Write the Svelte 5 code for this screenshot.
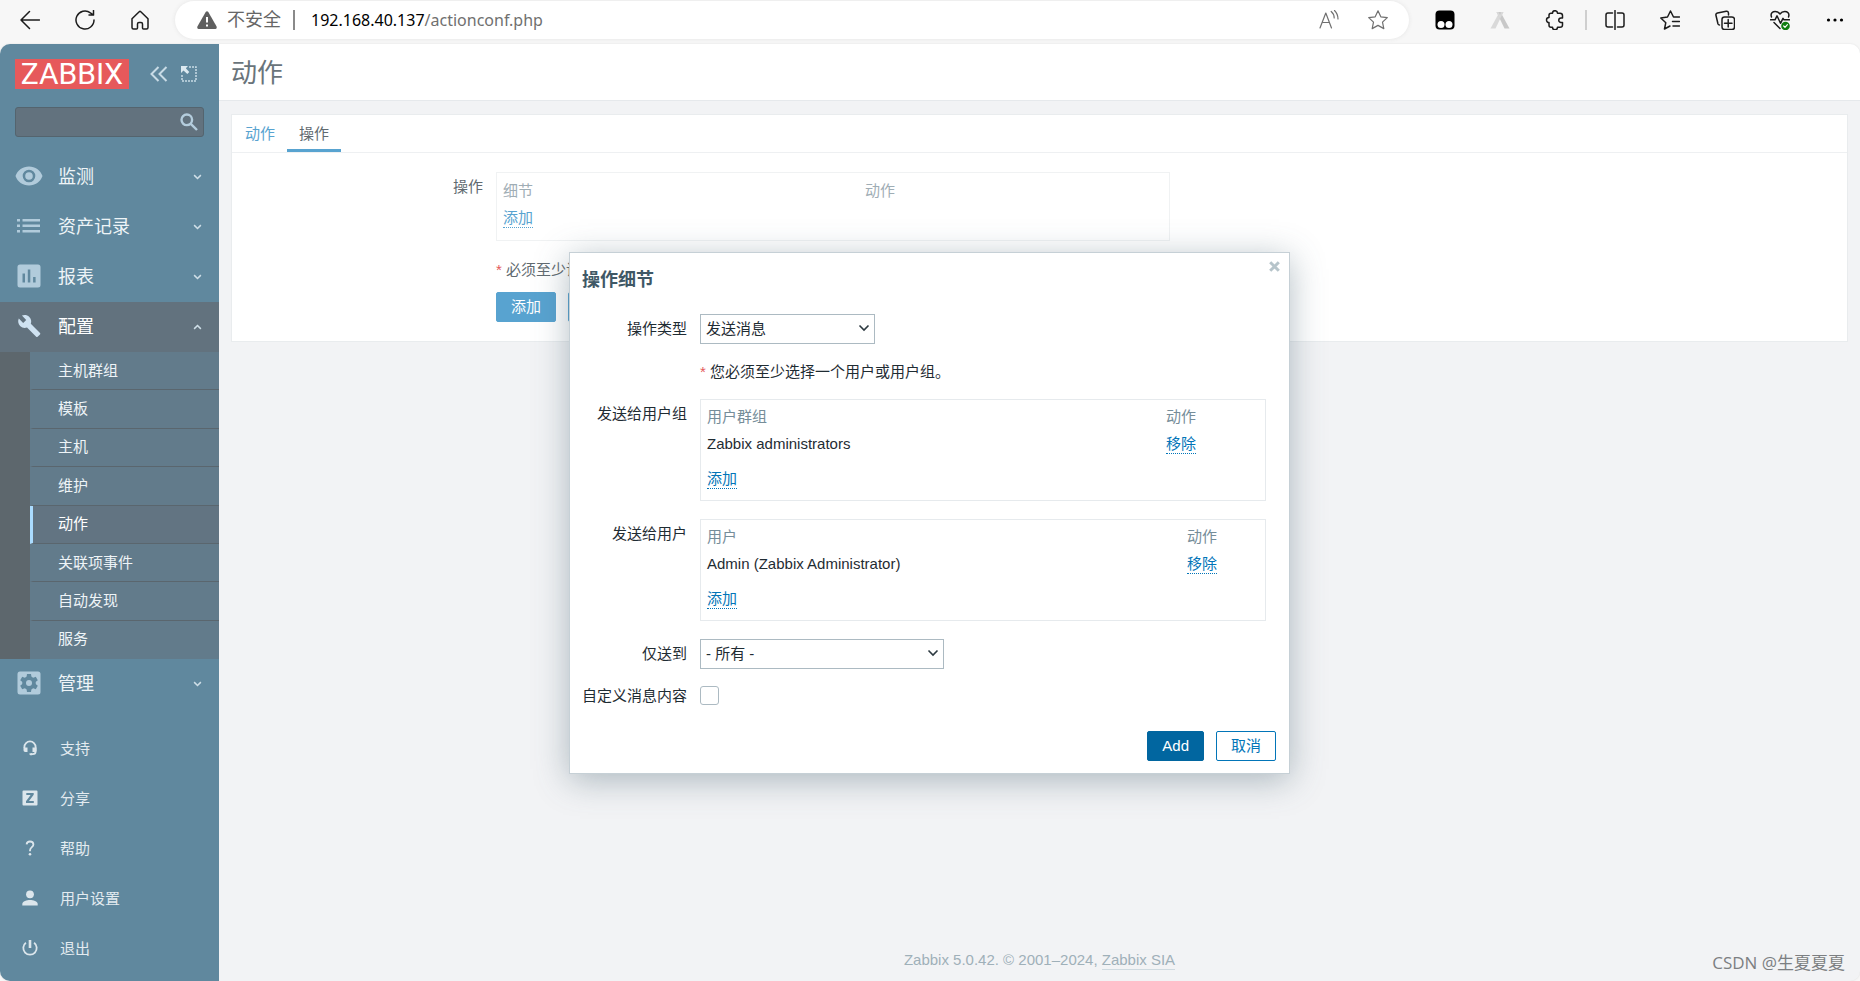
<script>
  let search = $state('');
  let operation = $state('发送消息');
  let media = $state('- 所有 -');
  let custom = $state(false);

  const menu = [
    { icon: 'eye', label: '监测' },
    { icon: 'list', label: '资产记录' },
    { icon: 'chart', label: '报表' },
    {
      icon: 'wrench',
      label: '配置',
      open: true,
      items: ['主机群组', '模板', '主机', '维护', '动作', '关联项事件', '自动发现', '服务']
    },
    { icon: 'gear', label: '管理' }
  ];
  const selected = '动作';

  const links = [
    { icon: 'support', label: '支持' },
    { icon: 'share', label: '分享' },
    { icon: 'help', label: '帮助' },
    { icon: 'user', label: '用户设置' },
    { icon: 'power', label: '退出' }
  ];

  const recipients = [
    { label: '发送给用户组', head: '用户群组', name: 'Zabbix administrators', kind: 'groups' },
    { label: '发送给用户', head: '用户', name: 'Admin (Zabbix Administrator)', kind: 'users' }
  ];
</script>

{#snippet chevron()}
  <svg class="chevron" viewBox="0 0 12 8" width="12" height="8" aria-hidden="true"><path d="M1.5 1.5 6 6l4.500-4.500" /></svg>
{/snippet}

{#snippet glyph(name)}
  {#if name === 'eye'}
    <svg viewBox="0 0 28 20" width="28" height="20"><path fill-rule="evenodd" d="M14 0.500C7.800.500 2.500 4.300.500 10c2 5.700 7.300 9.500 13.500 9.500S25.500 15.700 27.500 10C25.500 4.300 20.200.500 14 .500zm0 15.800a6.300 6.300 0 1 1 0-12.600 6.300 6.300 0 0 1 0 12.600zm0-10.100a3.800 3.800 0 1 0 0 7.600 3.800 3.800 0 0 0 0-7.600z" /></svg>
  {:else if name === 'list'}
    <svg viewBox="0 0 24 16" width="24" height="16"><path d="M0 1h3v2.500H0zm5.500 0H23v2.500H5.500zM0 6.500h3V9H0zm5.500 0H23V9H5.500zM0 12h3v2.500H0zm5.500 0H23v2.500H5.500z" /></svg>
  {:else if name === 'chart'}
    <svg viewBox="0 0 24 24" width="24" height="24"><path fill-rule="evenodd" d="M3 .500h18A2.500 2.500 0 0 1 23.500 3v18a2.500 2.500 0 0 1-2.500 2.500H3A2.500 2.500 0 0 1 .500 21V3A2.500 2.500 0 0 1 3 .500zM5.500 9.500v9H8v-9zm5.300-4v13h2.500v-13zm5.300 7.500v5.500h2.500V13z" /></svg>
  {:else if name === 'wrench'}
    <svg viewBox="0 0 24 24" width="24" height="24"><path d="M23 19 13.800 9.800c.900-2.300.400-5-1.500-6.900C10.300.900 7.300.500 4.900 1.600l4.300 4.300-3 3L1.800 4.600C.600 7 1.100 10 3.100 12c1.900 1.900 4.600 2.400 6.900 1.500l9.200 9.200c.4.400 1 .4 1.400 0l2.400-2.300c.4-.4.4-1.100 0-1.400z" /></svg>
  {:else if name === 'gear'}
    <svg viewBox="0 0 24 24" width="24" height="24"><rect x=".500" y=".500" width="23" height="23" rx="2.500" /><g class="hole"><circle cx="12" cy="12" r="6.800" /><path d="M10 3h4l.600 4H9.400zM10 21h4l.600-4H9.400zM3.200 9.200l2-3.500 3.700 1.500-2.600 4.500zM20.800 9.200l-2-3.500-3.700 1.500 2.600 4.500zM3.200 14.800l2 3.500 3.700-1.500-2.600-4.500zM20.800 14.800l-2 3.500-3.700-1.500 2.600-4.500z" /></g><circle cx="12" cy="12" r="3" /></svg>
  {:else if name === 'support'}
    <svg viewBox="0 0 16 16" width="16" height="16"><path class="line" d="M2.400 8V7a5.600 5.600 0 0 1 11.200 0v4.500c0 1.700-1 2.700-2.800 2.700H9" /><path d="M1.500 7.500h4V12H3.200a1.700 1.700 0 0 1-1.700-1.700zm9 0h4v3.800l-1 .700h-3zM7.500 13.200h2.700v2H8.500a1 1 0 0 1-1-1z" /></svg>
  {:else if name === 'share'}
    <svg viewBox="0 0 16 16" width="16" height="16"><path fill-rule="evenodd" d="M1.500.500h13a1 1 0 0 1 1 1v13a1 1 0 0 1-1 1h-13a1 1 0 0 1-1-1v-13a1 1 0 0 1 1-1zM4.300 3v2h4.300L4 11.200V13h7.800v-2H7l4.700-6.200V3z" /></svg>
  {:else if name === 'help'}
    <svg viewBox="0 0 16 16" width="16" height="16"><path class="line" d="M4.600 4.300C4.800 2.500 6.200 1.500 8 1.500c2 0 3.400 1.100 3.400 2.900C11.400 7.200 8 7.200 8 10.500v.8" /><circle cx="8" cy="14.200" r="1.300" /></svg>
  {:else if name === 'user'}
    <svg viewBox="0 0 16 16" width="16" height="16"><circle cx="8" cy="4.300" r="3.900" /><path d="M.300 15.500v-1.600c0-2.600 4.600-3.900 7.700-3.900s7.700 1.300 7.700 3.900v1.600z" /></svg>
  {:else}
    <svg viewBox="0 0 16 16" width="16" height="16"><path class="line" d="M3.900 2.700a6.700 6.700 0 1 0 8.200 0" /><path class="line thick" d="M8 0v8" /></svg>
  {/if}
{/snippet}

<div class="browser">
  <div class="toolbar">
    <button class="tool" aria-label="后退"><svg viewBox="0 0 20 20"><path d="M19.500 10H1M9.500 1.500 1 10l8.500 8.500" /></svg></button>
    <button class="tool" aria-label="刷新"><svg viewBox="0 0 20 20"><path d="M19 10a9 9 0 1 1-3.600-7.200L18.500 5M18.500.500V5H14" /></svg></button>
    <button class="tool" aria-label="主页"><svg viewBox="0 0 20 20"><path d="M2 8.800 9.200 1.700q.8-.7 1.600 0L18 8.800v8.700q0 1.500-1.500 1.500h-3q-1 0-1-1v-4q0-1.500-1.500-1.500H9q-1.500 0-1.500 1.500v4q0 1-1 1h-3Q2 19 2 17.500z" /></svg></button>
    <div class="address">
      <svg class="warn" viewBox="0 0 20 18" width="20" height="18"><path d="M8.700 1Q10-.7 11.300 1l8.300 14.600Q20 18 18.300 18H1.700Q0 18 .4 15.600z" /><path class="mark" d="M10 6v5.500M10 13.500v2" /></svg>
      <span class="insecure">不安全</span>
      <span class="bar"></span>
      <span class="url">192.168.40.137<span>/actionconf.php</span></span>
      <button class="tool" aria-label="朗读"><svg viewBox="0 0 20 20"><path d="m1 18 5.800-15L12.500 18M3 12.500h7.500M12.200 1.500q3 2.500 3 6.500M15.500.500q3.500 3.500 3.500 8.500" /></svg></button>
      <button class="tool" aria-label="收藏"><svg viewBox="0 0 20 20"><path d="m10 .8 2.800 6 6.500.8-4.800 4.500 1.300 6.500L10 15.400l-5.800 3.200 1.300-6.500L.7 7.600l6.500-.8z" /></svg></button>
    </div>
    <button class="tool" aria-label="扩展一"><svg viewBox="0 0 20 20"><rect class="solid" x=".500" y=".500" width="19" height="19" rx="4" /><circle class="white" cx="6" cy="14.500" r="3.500" /><circle class="white" cx="14" cy="14.500" r="3.500" /></svg></button>
    <button class="tool" aria-label="扩展二"><svg viewBox="0 0 20 20"><path class="paler" d="M9.500 2h4L5.500 18.500H.500z" /><path class="pale" d="M10.500 2h-4l8 16.500h5z" /><path class="paler" d="M6.500 2h2L10 5l1.500-3h2l-3.500 7z" /></svg></button>
    <button class="tool" aria-label="扩展"><svg viewBox="0 0 20 20"><path d="M7.500 3.200a2.500 2.500 0 0 1 5 0H15q2.500 0 2.500 2.300V8h-1.500a2 2 0 0 0 0 4.500h1.500v2.500q0 2.300-2.500 2.300h-2.500a2.500 2.500 0 0 1-5 0H6q-2 0-2-2v-2.700a2.500 2.500 0 0 1 0-5V5.200q0-2 2-2z" /></svg></button>
    <span class="divider"></span>
    <button class="tool near" aria-label="分屏"><svg viewBox="0 0 20 20"><path d="M7.500 3H3Q1 3 1 5v10q0 2 2 2h4.500M12.500 3H17q2 0 2 2v10q0 2-2 2h-4.500M10 .5v19" /></svg></button>
    <button class="tool" aria-label="收藏夹"><svg viewBox="0 0 20 20"><path d="M19.500 7h-6L10.500 1 7.500 7 .800 8l5 4.700-1.300 6.300 5.500-3M12.500 11.500h7M13 16h6.500" /></svg></button>
    <button class="tool" aria-label="集锦"><svg viewBox="0 0 20 20"><path d="M13.500 5V3q-.3-2-2.300-1.700L2.500 3Q.5 3.500 1 5.500l2 8.500q.5 1 1.500 1" /><rect x="7" y="7" width="12.500" height="12.500" rx="2.500" /><path d="M13.200 9.500v7.500M9.500 13.200H17" /></svg></button>
    <button class="tool" aria-label="浏览器概要"><svg viewBox="0 0 20 20"><path d="M1.500 7C0 3 3 1.500 5.200 1.500q3 0 4.800 2.500 1.800-2.500 4.800-2.500C17 1.500 20 3 18.500 7M.5 9.800H5l2-4 3.500 7.500 2.500-5 1 1.500h5.500M4 12.500l6 6" /><circle class="green" cx="15.500" cy="16" r="4.300" /><path class="tick" d="m13.700 16 1.300 1.300 2.400-2.600" /></svg></button>
    <button class="tool" aria-label="更多"><svg viewBox="0 0 20 20"><circle class="solid" cx="3.500" cy="10" r="1.600" /><circle class="solid" cx="10" cy="10" r="1.600" /><circle class="solid" cx="16.500" cy="10" r="1.600" /></svg></button>
  </div>

  <div class="page">
    <aside>
      <div class="brand">
        <a class="logo" href="#home">ZABBIX</a>
        <button aria-label="折叠菜单"><svg viewBox="0 0 18 16" width="18" height="16"><path d="M8.500 1 1.500 8l7 7M16.500 1l-7 7 7 7" /></svg></button>
        <button aria-label="隐藏菜单"><svg viewBox="0 0 16 16" width="16" height="16"><path class="dots" d="M8 1h7v14H1V8" /><path class="arrow" d="M0 0h7L4.800 2.200 8.300 6 6.300 8 2.500 4.500 0 7z" /></svg></button>
      </div>
      <div class="search">
        <input type="text" aria-label="搜索" bind:value={search} />
        <button aria-label="搜索"><svg viewBox="0 0 18 18" width="18" height="18"><circle cx="6.800" cy="6.800" r="5.300" /><path d="m10.800 10.800 6.200 6.200" /></svg></button>
      </div>
      <nav>
        {#each menu as entry}
          <a class="entry" class:open={entry.open} href="#menu">
            <span class="ico">{@render glyph(entry.icon)}</span>{entry.label}{@render chevron()}
          </a>
          {#if entry.items}
            <div class="sub">
              {#each entry.items as item}
                <a class:current={item === selected} href="#item">{item}</a>
              {/each}
            </div>
          {/if}
        {/each}
      </nav>
      <div class="links">
        {#each links as link}
          <a href="#link"><span class="ico">{@render glyph(link.icon)}</span>{link.label}</a>
        {/each}
      </div>
    </aside>

    <main>
      <header><h1>动作</h1></header>
      <section class="panel">
        <div class="tabs">
          <a href="#action">动作</a>
          <a class="active" href="#operations">操作</a>
        </div>
        <div class="row">
          <span class="label">操作</span>
          <table class="ops">
            <thead><tr><th>细节</th><th>动作</th></tr></thead>
            <tbody><tr><td colspan="2"><a class="dotted" href="#add">添加</a></td></tr></tbody>
          </table>
        </div>
        <div class="row">
          <span></span>
          <p><i>*</i> 必须至少设</p>
        </div>
        <div class="row">
          <span></span>
          <div class="buttons"><button class="btn">添加</button><button class="btn plain" aria-label="取消"></button></div>
        </div>
      </section>
      <footer>Zabbix 5.0.42. © 2001–2024, <a href="#sia">Zabbix SIA</a></footer>
    </main>
  </div>

  <div class="dialog" role="dialog" aria-labelledby="dialog-title">
    <button class="close" aria-label="关闭"><svg viewBox="0 0 11 11" width="11" height="11"><path d="m1.200 1.200 8.600 8.600M9.800 1.200 1.200 9.800" /></svg></button>
    <h2 id="dialog-title">操作细节</h2>
    <div class="form">
      <label for="type">操作类型</label>
      <span class="select type">
        <select id="type" bind:value={operation}><option>发送消息</option></select>
        {@render chevron()}
      </span>
      <p><i>*</i> 您必须至少选择一个用户或用户组。</p>
      {#each recipients as r}
        <span class="label">{r.label}</span>
        <table class={r.kind}>
          <thead><tr><th>{r.head}</th><th>动作</th></tr></thead>
          <tbody>
            <tr><td>{r.name}</td><td><a class="dotted" href="#remove">移除</a></td></tr>
            <tr class="add"><td colspan="2"><a class="dotted" href="#add">添加</a></td></tr>
          </tbody>
        </table>
      {/each}
      <label for="media">仅送到</label>
      <span class="select media">
        <select id="media" bind:value={media}><option>- 所有 -</option></select>
        {@render chevron()}
      </span>
      <label class="short" for="custom">自定义消息内容</label>
      <input id="custom" type="checkbox" bind:checked={custom} />
    </div>
    <div class="buttons end"><button class="btn">Add</button><button class="btn plain">取消</button></div>
  </div>
  <span class="watermark">CSDN @生夏夏夏</span>
</div>

<style>
  :global(body) {
    margin: 0;
  }
  .browser {
    position: relative;
    display: flex;
    flex-direction: column;
    min-height: 100vh;
    background: #f7f7f7;
    color: #1f2c33;
    font: 15px/20px 'Liberation Sans', 'Noto Sans CJK SC', sans-serif;
  }
  .browser * {
    box-sizing: border-box;
  }
  a {
    color: inherit;
    text-decoration: none;
  }
  button {
    padding: 0;
    border: 0;
    background: none;
    color: inherit;
    font: inherit;
  }
  svg {
    display: block;
  }

  /* browser toolbar */
  .toolbar {
    display: flex;
    align-items: center;
    height: 44px;
    padding: 0 15px 4px 20px;
  }
  .tool {
    flex: none;
    width: 20px;
    height: 20px;
    margin-left: 35px;
  }
  .tool:first-child {
    margin-left: 0;
  }
  .tool svg {
    width: 20px;
    height: 20px;
    fill: none;
    stroke: #1c1c1c;
    stroke-width: 1.5;
    stroke-linejoin: round;
    stroke-linecap: round;
  }
  .tool .solid {
    fill: #000;
    stroke: none;
  }
  .tool .white {
    fill: #fff;
    stroke: none;
  }
  .tool .pale {
    fill: #c8c8c8;
    stroke: none;
  }
  .tool .paler {
    fill: #d9d9d9;
    stroke: none;
  }
  .tool .green {
    fill: #107c10;
    stroke: none;
  }
  .tool .tick {
    stroke: #fff;
    stroke-width: 1.2;
  }
  .address {
    flex: 1;
    display: flex;
    align-items: center;
    height: 38px;
    margin: 0 -9px 0 25px;
    padding: 0 21px 0 22px;
    border-radius: 19px;
    background: #fff;
    box-shadow: 0 0 4px #e4e4e4;
  }
  .address .tool {
    margin-left: 29px;
  }
  .address .tool svg {
    stroke: #707070;
    stroke-width: 1.2;
  }
  .warn {
    fill: #5f5f5f;
  }
  .warn .mark {
    stroke: #fff;
    stroke-width: 2;
  }
  .insecure {
    margin-left: 10px;
    color: #666;
    font-size: 18px;
  }
  .bar {
    width: 2px;
    height: 20px;
    margin: 0 16px 0 12px;
    background: #8a8a8a;
  }
  .url {
    flex: 1;
    color: #000;
    font-family: 'Noto Sans', sans-serif;
    font-size: 16px;
  }
  .url span {
    color: #707070;
  }
  .divider {
    width: 2px;
    height: 20px;
    margin-left: 20px;
    background: #cfcfcf;
  }
  .tool.near {
    margin-left: 18px;
  }

  /* sidebar */
  .page {
    flex: 1;
    display: flex;
    overflow: hidden;
    border-radius: 10px;
    background: #f2f3f5;
    box-shadow: 0 0 2px #dcdcdc;
  }
  aside {
    flex: none;
    display: flex;
    flex-direction: column;
    width: 219px;
    background: #60889e;
    color: #eef4f7;
  }
  .brand {
    display: flex;
    align-items: center;
    height: 30px;
    margin: 15px 22px 18px 15px;
  }
  .brand svg {
    fill: none;
    stroke: #c8dbe6;
    stroke-width: 2;
  }
  .brand button {
    margin-left: auto;
  }
  .brand button + button {
    margin-left: 13px;
  }
  .brand .dots {
    stroke-width: 1.5;
    stroke-dasharray: 2 1;
  }
  .brand .arrow {
    fill: #dce9f0;
    stroke: none;
  }
  .logo {
    width: 114px;
    background: #e6595b;
    color: #fff;
    font: 30px/30px Roboto, sans-serif;
    text-align: center;
  }
  .search {
    display: flex;
    align-items: center;
    height: 30px;
    margin: 0 15px 15px;
    padding-right: 5px;
    border: 1px solid #54646e;
    border-radius: 3px;
    background: #62727e;
  }
  .search input {
    flex: 1;
    min-width: 0;
    padding: 0 6px;
    border: 0;
    outline: 0;
    background: none;
    color: #fff;
    font: inherit;
  }
  .search svg {
    fill: none;
    stroke: #b4cddd;
    stroke-width: 2.4;
  }
  .entry {
    display: flex;
    align-items: center;
    height: 50px;
    padding-right: 17px;
    font-size: 18px;
  }
  .ico {
    flex: none;
    display: flex;
    justify-content: center;
    width: 58px;
    padding-bottom: 2px;
    fill: #b1cbdb;
  }
  .ico .hole {
    fill: #60889e;
  }
  .ico .line {
    fill: none;
    stroke: #dce6ec;
    stroke-width: 1.8;
  }
  .ico .thick {
    stroke-width: 2.6;
  }
  .open {
    background: #62727e;
    color: #fff;
  }
  .open .ico {
    fill: #cfe2f1;
  }
  .chevron {
    flex: none;
    margin-left: auto;
    fill: none;
    stroke: #cfdfe8;
    stroke-width: 1.6;
  }
  .entry .chevron {
    width: 9px;
    height: 6px;
    stroke-width: 2;
  }
  .open .chevron {
    transform: scaleY(-1);
  }
  .sub {
    display: grid;
    grid-template-rows: repeat(8, 1fr);
    height: 307px;
    border-left: 30px solid #5d676d;
    background: #627b8b;
  }
  .sub a {
    display: flex;
    align-items: center;
    padding-left: 25px;
    border-left: 3px solid transparent;
    border-bottom: 1px solid #5a666e;
  }
  .sub a:last-child {
    border-bottom-color: transparent;
  }
  .sub .current {
    border-left-color: #aadcff;
    background: #627482;
    color: #fff;
  }
  .links {
    margin-top: auto;
    padding-bottom: 7px;
  }
  .links a {
    display: flex;
    align-items: center;
    height: 50px;
    color: #e3ebf0;
  }
  .links .ico {
    width: 60px;
    fill: #dce6ec;
  }

  /* page content */
  main {
    flex: 1;
    display: flex;
    flex-direction: column;
    min-width: 0;
    color: #616a70;
  }
  header {
    height: 57px;
    padding: 0 12px;
    border-bottom: 1px solid #e6e9ec;
    background: #fff;
  }
  h1 {
    margin: 0;
    color: #69747b;
    font-size: 26px;
    font-weight: 400;
    line-height: 58px;
  }
  .panel {
    margin: 13px 12px 0;
    padding-bottom: 19px;
    border: 1px solid #e9ecee;
    background: #fff;
  }
  .tabs {
    display: flex;
    height: 38px;
    margin-bottom: 19px;
    padding-left: 1px;
    border-bottom: 1px solid #eef0f2;
  }
  .tabs a {
    padding: 9px 12px 5px;
    border-bottom: 3px solid transparent;
    color: #58a3d0;
  }
  .tabs a.active {
    border-color: #58a3d0;
    color: #616a70;
  }
  .row {
    display: grid;
    grid-template-columns: 251px 1fr;
    column-gap: 13px;
  }
  .label,
  label {
    padding-top: 5px;
    text-align: right;
    white-space: nowrap;
  }
  p {
    margin: 19px 0 12px;
    white-space: nowrap;
  }
  i {
    color: #e45959;
    font-style: normal;
  }
  table {
    border: 1px solid #e6eaed;
    border-spacing: 0;
    table-layout: fixed;
    width: 100%;
  }
  th,
  td {
    height: 27px;
    padding: 0 6px;
    text-align: left;
    font-weight: 400;
  }
  th {
    color: #768d99;
  }
  .ops {
    width: 674px;
    padding: 4px 0 8px;
    border-color: #f0f2f3;
  }
  .ops th {
    color: #9fadb5;
  }
  .ops td {
    height: 28px;
  }
  .ops th:first-child {
    width: 362px;
  }
  .dotted {
    display: inline-block;
    border-bottom: 1px dotted;
    color: #0275b8;
    line-height: 19px;
  }
  .ops .dotted {
    color: #58a3d0;
  }
  .buttons {
    display: flex;
    gap: 12px;
  }
  .btn {
    height: 30px;
    min-width: 56px;
    padding: 0 14px;
    border: 1px solid #0166a0;
    border-radius: 2px;
    background: #0166a0;
    color: #fff;
  }
  .btn.plain {
    border-color: #0275b8;
    background: #fff;
    color: #0275b8;
  }
  main .btn {
    border-color: #58a3d0;
    background: #58a3d0;
  }
  main .btn.plain {
    border-color: #58a3d0;
  }
  footer {
    margin-top: auto;
    padding: 12px 0 11px;
    color: #9fb0b9;
    text-align: center;
  }
  footer a {
    display: inline-block;
    border-bottom: 1px solid #cfdae0;
    line-height: 18px;
  }

  /* dialog over the page */
  .dialog {
    position: absolute;
    top: 252px;
    left: calc(50% - 361px);
    width: 721px;
    padding: 15px 12px 12px;
    border: 1px solid #c6d0d6;
    background: #fff;
    box-shadow: 0 6px 32px rgba(75, 100, 115, 0.42);
  }
  .close {
    position: absolute;
    top: 8px;
    right: 9px;
  }
  .close path {
    stroke: #b6c4ca;
    stroke-width: 3;
  }
  h2 {
    margin: 0 0 21px;
    color: #3f5866;
    font-size: 18px;
    line-height: 25px;
  }
  .form {
    display: grid;
    grid-template-columns: max-content 1fr;
    column-gap: 13px;
    padding-right: 11px;
  }
  .form p {
    grid-column: 2;
    margin: 18px 0 17px;
  }
  .groups,
  .users {
    margin-bottom: 18px;
    padding: 3px 0 0;
  }
  .groups th:last-child {
    width: 105px;
  }
  .users th:last-child {
    width: 84px;
  }
  .add td {
    height: 43px;
  }
  .select {
    position: relative;
    height: 30px;
  }
  .type {
    width: 175px;
  }
  .media {
    width: 244px;
    margin-bottom: 17px;
  }
  select {
    appearance: none;
    width: 100%;
    height: 30px;
    padding: 0 5px;
    border: 1px solid #acbac2;
    border-radius: 0;
    background: #fff;
    color: inherit;
    font: inherit;
  }
  .select .chevron {
    position: absolute;
    top: 10px;
    right: 5px;
    stroke: #2c3940;
  }
  .short {
    padding-top: 0;
  }
  input[type='checkbox'] {
    appearance: none;
    width: 19px;
    height: 19px;
    margin: 0;
    border: 1px solid #acbac2;
    border-radius: 3px;
    background: #fff;
  }
  input[type='checkbox']:checked {
    background: #0275b8;
  }
  .end {
    justify-content: flex-end;
    margin-top: 25px;
    padding-right: 1px;
  }
  .watermark {
    position: absolute;
    right: 15px;
    bottom: 7px;
    color: #7c7f82;
    font: 17px/22px 'Open Sans', 'Noto Sans CJK SC', sans-serif;
  }
</style>
